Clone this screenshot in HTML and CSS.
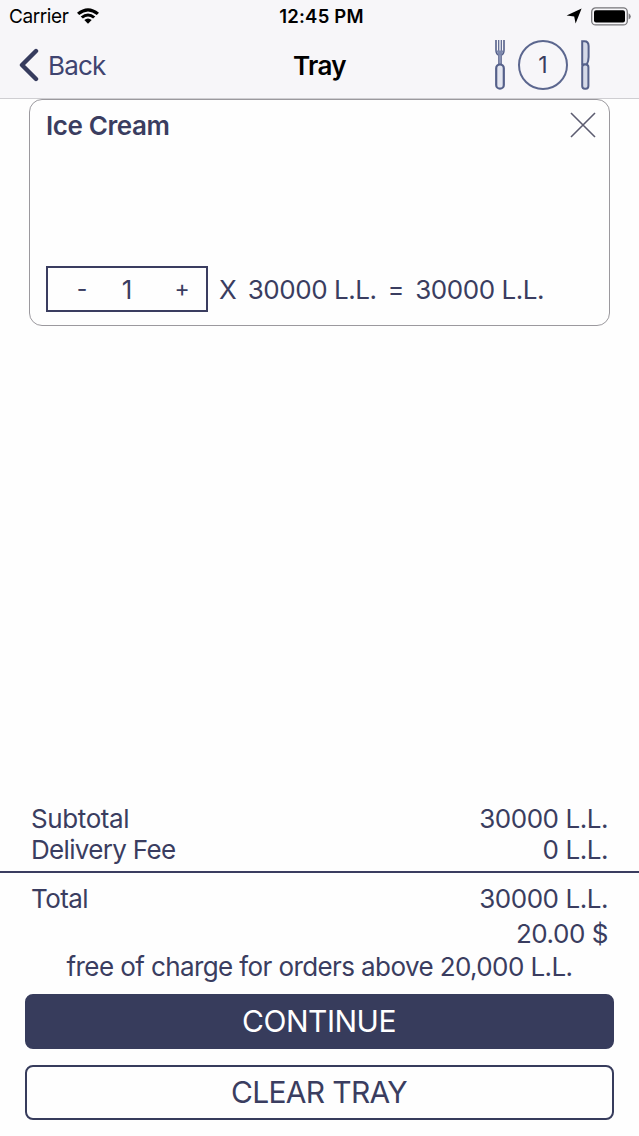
FILE: index.html
```html
<!DOCTYPE html>
<html lang="en">
<head>
  <meta charset="UTF-8">
  <meta name="viewport" content="width=device-width, initial-scale=1.0">
  <link rel="stylesheet" href="styles.css">
  <title>Tray</title>
</head>
<body>

  <header class="header">
    <div class="status-bar">
      <div class="status-left">
        <span class="carrier">Carrier</span>
        <svg class="wifi" width="22" height="16" viewBox="0 0 22 16">
          <path d="M0 4.8 Q11 -4.4 22 4.8 L19.8 7 Q11 0 2.2 7 Z"/>
          <path d="M3.7 8.4 Q11 2.4 18.3 8.4 L16.1 10.6 Q11 6.6 5.9 10.6 Z"/>
          <path d="M7.3 12 Q11 9 14.7 12 L11 15.7 Z"/>
        </svg>
      </div>
      <span class="clock">12:45 PM</span>
      <div class="status-right">
        <svg width="16" height="16" viewBox="0 0 16 16">
          <path d="M15.6 0.4 L9.6 15.4 L8.2 8.4 L0.6 7.6 Z"/>
        </svg>
        <svg width="40" height="19" viewBox="0 0 40 19">
          <rect x="0.7" y="0.9" width="35.6" height="17" rx="4" fill="none" stroke="#77767a" stroke-width="1.3"/>
          <rect x="3" y="3.2" width="31" height="12.4" rx="2"/>
          <path d="M37.6 6.2 Q39.8 7.4 39.8 9.4 Q39.8 11.4 37.6 12.6 Z" fill="#77767a"/>
        </svg>
      </div>
    </div>

    <div class="nav-bar">
      <a class="back" href="#">
        <svg width="20" height="34" viewBox="0 0 20 34">
          <path d="M17 3 L3 17 L17 31" fill="none" stroke="#373c5e" stroke-width="4.4" stroke-linecap="round" stroke-linejoin="round"/>
        </svg>
        <span>Back</span>
      </a>
      <h1 class="title">Tray</h1>
      <div class="tray-icon">
        <svg width="10" height="50" viewBox="0 0 10 50" fill="none" stroke="#55608a" stroke-width="1.6">
          <path d="M1 0 V10 Q1 14.6 4 15 V24 M9 0 V10 Q9 14.6 6 15 V24"/>
          <path d="M3.7 0 V11 M6.3 0 V11" stroke-width="1.2"/>
          <path d="M1.2 10.5 H8.8 L6.5 15 H3.5 Z" fill="#7d88ad" stroke="none"/>
          <path d="M5 15 V24" stroke="#8b96b8"/>
          <rect x="1.2" y="24.5" width="7.6" height="24.2" rx="3.8" fill="#e4e6f0" stroke-width="2.2"/>
        </svg>
        <span class="tray-count">1</span>
        <svg width="9" height="50" viewBox="0 0 9 50" fill="none" stroke="#55608a" stroke-width="2">
          <path d="M1.2 1.2 V24.5 H5.8 Q7.6 21 7.6 17 V6 Q7.6 1.2 3.4 1.2 Z" fill="#d5d9e8"/>
          <rect x="1.2" y="24.5" width="6.2" height="24.2" rx="2.6" fill="#d5d9e8"/>
        </svg>
      </div>
    </div>
  </header>

  <main class="items">
    <div class="item">
      <div class="item-top">
        <h2 class="item-name">Ice Cream</h2>
        <svg class="remove" width="26" height="26" viewBox="0 0 26 26">
          <path d="M1 1 L25 25 M25 1 L1 25" fill="none" stroke="#5c5c70" stroke-width="1.6"/>
        </svg>
      </div>
      <div class="item-bottom">
        <div class="stepper">
          <span class="minus">-</span>
          <span class="quantity">1</span>
          <span class="plus">+</span>
        </div>
        <span class="times">X</span>
        <span class="price">30000 L.L.</span>
        <span class="equals">=</span>
        <span class="price">30000 L.L.</span>
      </div>
    </div>
  </main>

  <footer class="summary">
    <div class="row">
      <span class="label-subtotal">Subtotal</span>
      <span class="price">30000 L.L.</span>
    </div>
    <div class="row">
      <span class="label-delivery">Delivery Fee</span>
      <span class="price">0 L.L.</span>
    </div>
    <div class="total">
      <div class="row">
        <span class="label-total">Total</span>
        <span class="price">30000 L.L.</span>
      </div>
      <div class="row row-usd">
        <span class="price">20.00 $</span>
      </div>
    </div>
    <p class="note">free of charge for orders above 20,000 L.L.</p>
    <div class="buttons">
      <button class="btn btn-continue">CONTINUE</button>
      <button class="btn btn-clear">CLEAR TRAY</button>
    </div>
  </footer>

</body>
</html>
```
FILE: styles.css
```css
* {
  box-sizing: border-box;
}

body {
  margin: 0;
  height: 100vh;
  display: flex;
  flex-direction: column;
  font-family: Inter, "Liberation Sans", sans-serif;
  font-size: 26px;
  color: #3a3d60;
  background-color: #fefefe;
}

.header {
  height: 99px;
  background-color: #f7f6f9;
  border-bottom: 1px solid #cfced2;
}

.status-bar,
.nav-bar {
  display: grid;
  grid-template-columns: 1fr auto 1fr;
  align-items: center;
}

.status-bar {
  height: 32px;
  padding: 0 8px 0 9px;
  color: #000;
  font-size: 19px;
}

.status-left {
  display: flex;
  align-items: center;
  gap: 9px;
}

.carrier {
  letter-spacing: -0.4px;
}

.clock {
  margin-left: 3px;
  font-size: 18.5px;
  font-weight: 600;
  letter-spacing: 0.2px;
}

.status-right {
  display: flex;
  align-items: center;
  justify-content: flex-end;
  gap: 9px;
}

.nav-bar {
  height: 66px;
  padding: 0 49px 0 19px;
}

.back {
  display: flex;
  align-items: center;
  gap: 9px;
  color: #3f4470;
  letter-spacing: -0.8px;
  text-decoration: none;
}

.title {
  margin: 0 0 0 30px;
  color: #000;
  font-size: 26px;
  font-weight: 600;
  letter-spacing: -0.7px;
}

.tray-icon {
  display: flex;
  align-items: center;
  justify-content: flex-end;
  gap: 13px;
}

.tray-count {
  width: 50px;
  height: 50px;
  border: 2px solid #5c678f;
  border-radius: 50%;
  font-size: 23px;
  line-height: 46px;
  text-align: center;
}

.items {
  flex: 1;
  padding: 0 29px;
}

.item {
  display: flex;
  flex-direction: column;
  justify-content: space-between;
  height: 227px;
  padding: 10px 12px 13px 16px;
  border: 1px solid #9b999e;
  border-radius: 13px;
  background-color: #fefefe;
}

.item-top {
  display: flex;
  align-items: flex-start;
  justify-content: space-between;
}

.item-name {
  margin: 0;
  font-size: 26px;
  font-weight: 600;
  letter-spacing: -0.4px;
  line-height: 32px;
}

.remove {
  margin: 2px 1px 0 0;
}

.item-bottom {
  display: flex;
  align-items: center;
}

.stepper {
  display: grid;
  grid-template-columns: 68px 22px 1fr;
  align-items: center;
  width: 162px;
  height: 46px;
  border: 2px solid #3a3d60;
  text-align: center;
}

.minus,
.plus {
  font-size: 23px;
}

.plus {
  padding-left: 20px;
}

.price {
  letter-spacing: -0.45px;
}

.times {
  margin: 0 11px 0 11px;
}

.equals {
  margin: 0 11px;
  font-size: 25px;
}

.row {
  display: flex;
  justify-content: space-between;
  padding: 0 31px;
  line-height: 31px;
}

.label-subtotal {
  letter-spacing: -0.4px;
}

.label-delivery {
  letter-spacing: -0.67px;
}

.label-total {
  letter-spacing: -0.6px;
}

.total {
  margin-top: 6px;
  padding-top: 10px;
  border-top: 2px solid #3a3d60;
}

.row-usd {
  justify-content: flex-end;
  margin-top: 4px;
}

.note {
  margin: 2px 0 0;
  letter-spacing: -0.6px;
  line-height: 31px;
  text-align: center;
}

.buttons {
  display: flex;
  flex-direction: column;
  gap: 16px;
  padding: 12px 25px 16px;
}

.btn {
  height: 55px;
  padding: 0 1px 1px 0;
  border: 2px solid #373c5c;
  border-radius: 8px;
  font-family: inherit;
  font-size: 30px;
}

.btn-continue {
  color: #fff;
  background-color: #373c5c;
  letter-spacing: -0.5px;
}

.btn-clear {
  color: #3a3d60;
  background-color: #fefefe;
  letter-spacing: -0.7px;
}
```
